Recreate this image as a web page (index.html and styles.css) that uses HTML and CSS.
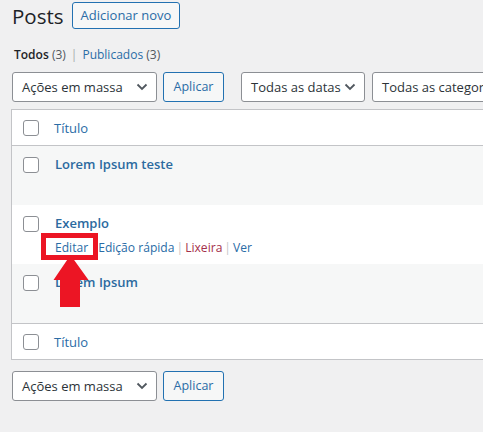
FILE: index.html
```html
<!DOCTYPE html>
<html lang="pt-BR">
<head>
    <meta charset="UTF-8">
    <title>Posts</title>
    <link rel="stylesheet" href="styles.css">
</head>
<body>
    <div class="wrap">
        <div class="heading">
            <h1>Posts</h1>
            <a class="add-new" href="#">Adicionar novo</a>
        </div>

        <ul class="subsub">
            <li><b>Todos</b> <span class="count">(3)</span></li>
            <li class="sep">|</li>
            <li><a href="#">Publicados</a> <span class="count">(3)</span></li>
        </ul>

        <div class="tablenav">
            <div class="select bulk">Ações em massa<svg class="chevron" viewBox="0 0 12 8"><path d="M1.500 1.500 6 6l4.500-4.500"/></svg></div>
            <a class="button" href="#">Aplicar</a>
            <div class="select dates">Todas as datas<svg class="chevron" viewBox="0 0 12 8"><path d="M1.500 1.500 6 6l4.500-4.500"/></svg></div>
            <div class="select cats">Todas as categorias</div>
        </div>

        <div class="table">
            <div class="row head">
                <span class="check"></span>
                <a class="col-title" href="#">Título</a>
            </div>
            <div class="row post alt">
                <span class="check"></span>
                <div class="cell"><a class="post-title" href="#">Lorem Ipsum teste</a></div>
            </div>
            <div class="row post">
                <span class="check"></span>
                <div class="cell">
                    <a class="post-title" href="#">Exemplo</a>
                    <div class="row-actions">
                        <a href="#">Editar</a>
                        <a class="quick" href="#">Edição rápida</a><i>|</i>
                        <a class="trash" href="#">Lixeira</a><i>|</i>
                        <a href="#">Ver</a>
                    </div>
                </div>
            </div>
            <div class="row post alt">
                <span class="check"></span>
                <div class="cell"><a class="post-title" href="#">Lorem Ipsum</a></div>
            </div>
            <div class="row head foot">
                <span class="check"></span>
                <a class="col-title" href="#">Título</a>
            </div>
        </div>

        <div class="tablenav bottom">
            <div class="select bulk">Ações em massa<svg class="chevron" viewBox="0 0 12 8"><path d="M1.500 1.500 6 6l4.500-4.500"/></svg></div>
            <a class="button" href="#">Aplicar</a>
        </div>
    </div>

    <!-- annotation drawn over the screenshot -->
    <div class="highlight"></div>
    <svg class="arrow" viewBox="0 0 36 52"><path d="M17.500 0 35.500 25H27V52H7V25H.5Z"/></svg>
</body>
</html>
```

FILE: styles.css
```css
* {
    margin: 0;
    padding: 0;
    box-sizing: border-box;
}

html, body {
    height: 100%;
    overflow: hidden;
}

body {
    position: relative;
    background: #f0f0f1;
    color: #3c434a;
    font-family: "Open Sans", "Noto Sans", sans-serif;
    font-size: 12.5px;
}

a {
    color: #2a6ca6;
    text-decoration: none;
}

.wrap {
    width: 560px;
    padding: 2px 0 0 12px;
}

.heading {
    display: flex;
    align-items: center;
    height: 27px;
}

.heading h1 {
    width: 60px;
    font-size: 20.5px;
    font-weight: 400;
    color: #1d2327;
}

.add-new {
    height: 27px;
    width: 108px;
    line-height: 25px;
    text-align: center;
    border: 1px solid #2271b1;
    border-radius: 3px;
    background: #f6f7f7;
    font-size: 13px;
}

.subsub {
    display: flex;
    gap: 4px;
    list-style: none;
    height: 20px;
    margin-top: 16px;
    padding-left: 2px;
    line-height: 20px;
    font-size: 12px;
}

.subsub b {
    font-weight: 600;
    color: #1d2327;
}

.count {
    color: #50575e;
}

.sep {
    color: #a7aaad;
    padding: 0 1px;
}

.tablenav {
    display: flex;
    height: 30px;
    margin-top: 7px;
}

.select {
    display: flex;
    align-items: center;
    justify-content: space-between;
    height: 30px;
    padding: 0 8px 0 9px;
    flex-shrink: 0;
    background: #fff;
    border: 1px solid #8c8f94;
    border-radius: 3px;
    font-size: 13px;
    white-space: nowrap;
    color: #2c3338;
}

.bulk {
    width: 145px;
}

.dates {
    width: 124px;
    margin-left: 17px;
}

.cats {
    width: 180px;
    margin-left: 7px;
}

.chevron {
    width: 12px;
    height: 8px;
    fill: none;
    stroke: #50575e;
    stroke-width: 1.800;
}

.button {
    width: 61px;
    height: 30px;
    margin-left: 6px;
    line-height: 28px;
    text-align: center;
    background: #f6f7f7;
    border: 1px solid #2271b1;
    border-radius: 3px;
    font-size: 12.5px;
}

.table {
    width: 548px;
    height: 251px;
    margin: 7px 0 0 -1px;
    background: #fff;
    border: 1px solid #c3c4c7;
}

.row {
    display: flex;
    padding-left: 11px;
}

.check {
    width: 16px;
    height: 16px;
    flex-shrink: 0;
    background: #fff;
    border: 1px solid #8c8f94;
    border-radius: 3px;
}

.head {
    height: 36px;
    align-items: center;
    border-bottom: 1px solid #c3c4c7;
}

.foot {
    border-bottom: 0;
    border-top: 1px solid #c3c4c7;
}

.col-title {
    margin-left: 15px;
    font-size: 13px;
}

.post {
    height: 59px;
    padding-top: 9px;
}

.post .check {
    margin-top: 2px;
}

.alt {
    background: #f6f7f7;
}

.cell {
    margin-left: 16px;
}

.post-title {
    display: block;
    font-size: 13px;
    font-weight: 600;
    line-height: 18px;
    color: #2c6a9f;
}

.row-actions {
    display: flex;
    gap: 4px;
    margin-top: 7px;
    font-size: 12.1px;
    line-height: 18px;
}

.row-actions i {
    margin: 0 -2px;
    font-style: normal;
    color: #c3c4c7;
}

.quick {
    margin-left: 6px;
}

.trash {
    color: #a4304a;
}

.bottom {
    margin-top: 11px;
}

.highlight {
    position: absolute;
    left: 41px;
    top: 233px;
    width: 57px;
    height: 27px;
    border: 5px solid #ec1524;
}

.arrow {
    position: absolute;
    left: 53px;
    top: 255px;
    width: 36px;
    height: 52px;
    fill: #ec1524;
}
```
